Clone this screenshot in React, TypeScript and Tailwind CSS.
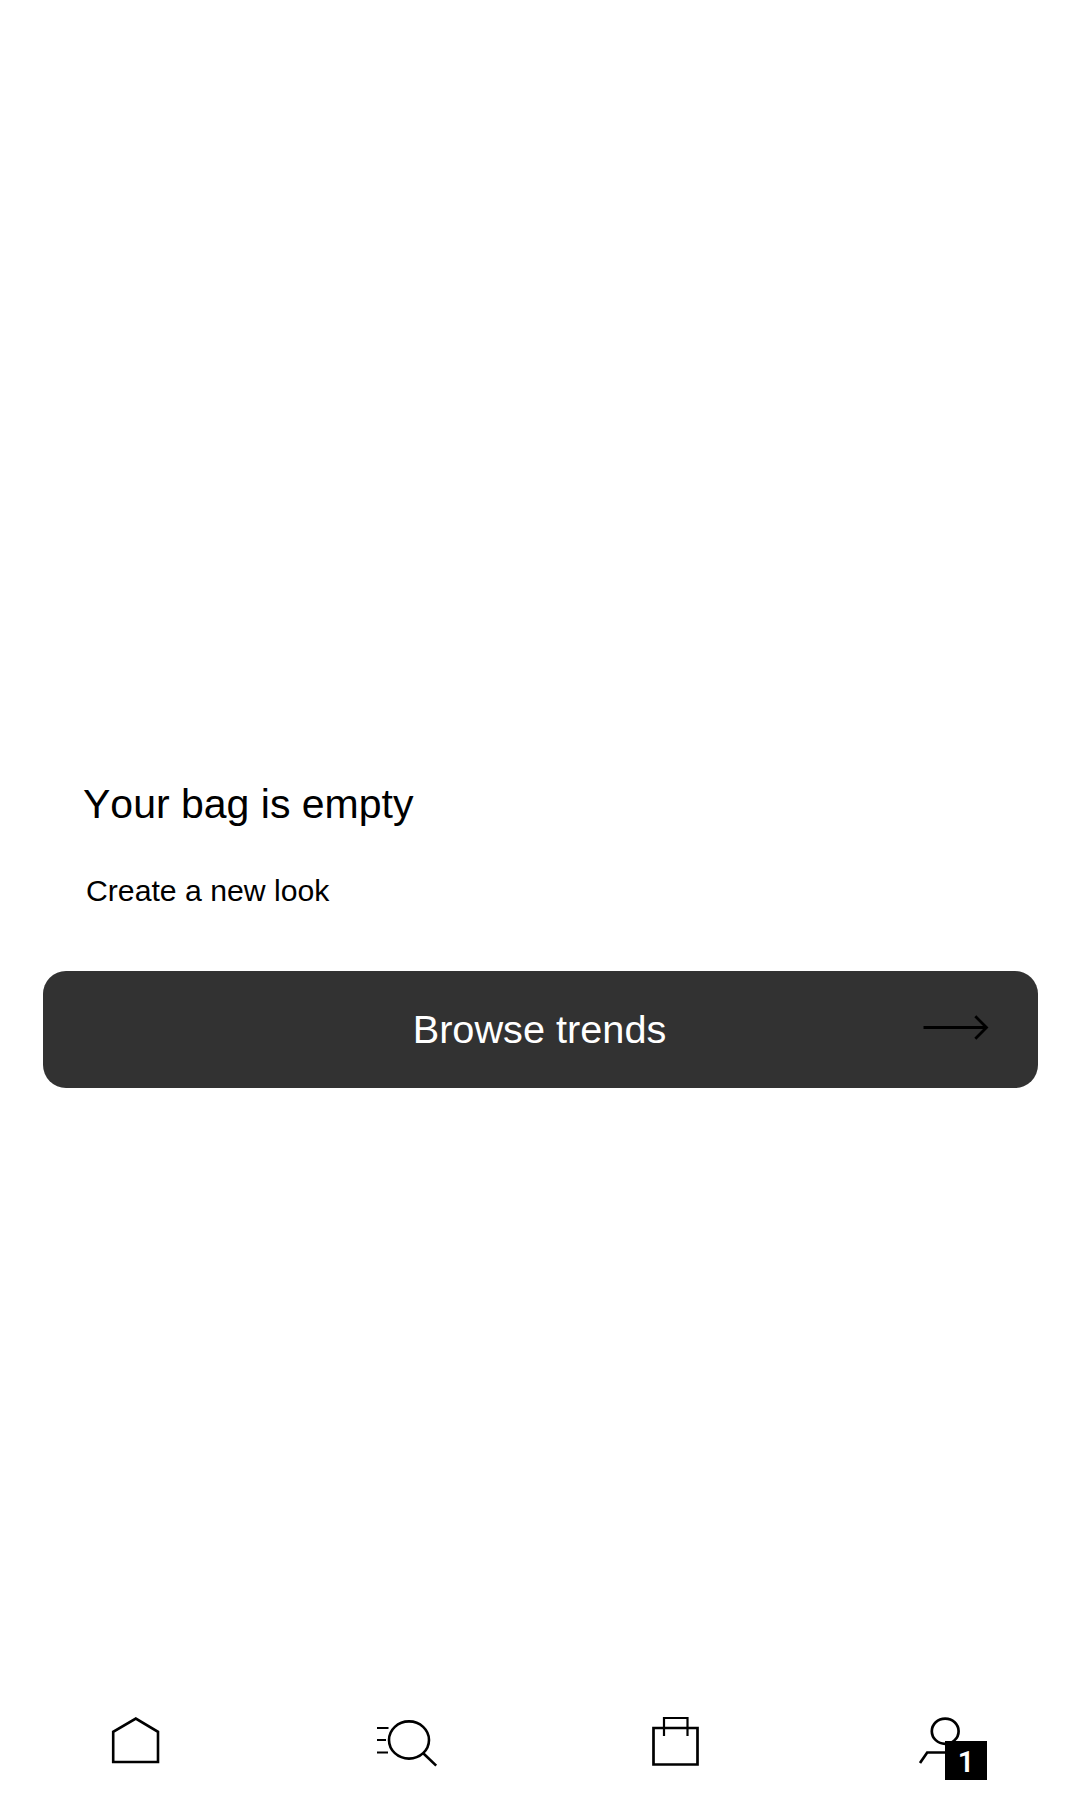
function HomeIcon() {
  return (
    <svg width="120" height="80" viewBox="75 1700 120 80" fill="none" stroke="#000" strokeWidth="2.6">
      <path d="M113.2 1731.8V1762H158V1731.8L135.8 1718.6Z" />
    </svg>
  );
}

function SearchIcon() {
  return (
    <svg width="120" height="80" viewBox="345 1700 120 80" fill="none" stroke="#000" strokeWidth="2.6">
      <ellipse cx="409" cy="1740" rx="20" ry="18.6" />
      <path d="M423.5 1753.5L436.2 1765.6" />
      <path strokeWidth="2.2" d="M377 1728H388.5M377 1740H386M377 1752.5H388" />
    </svg>
  );
}

function BagIcon() {
  return (
    <svg width="120" height="80" viewBox="615 1700 120 80" fill="none" stroke="#000">
      <path strokeWidth="2.7" d="M653.5 1728H697.5V1764.5H653.5Z" />
      <path strokeWidth="2.2" d="M664 1736V1718H687.5V1736" />
    </svg>
  );
}

function ProfileIcon() {
  return (
    <svg width="120" height="80" viewBox="885 1700 120 80" fill="none" stroke="#000" strokeWidth="2.7">
      <ellipse cx="945.2" cy="1731.2" rx="13.4" ry="12.6" />
      <path d="M920 1763L927.2 1752.5H950" />
    </svg>
  );
}

function ArrowIcon() {
  return (
    <svg width="66" height="26" viewBox="923 1014 66 26" fill="none" stroke="#000" strokeWidth="2.8">
      <path d="M923.5 1027.5H986.5M975.3 1016.3L986.5 1027.5L975.3 1038.7" />
    </svg>
  );
}

export default function App() {
  return (
    <div className="flex h-[1800px] w-[1080px] flex-col bg-white font-['Liberation_Sans',Arial,sans-serif] text-black">
      <main className="flex flex-1 flex-col px-[43px] pt-[779px]">
        <h1 className="ml-[40px] text-[41px] leading-[50px] [font-kerning:none]">Your bag is empty</h1>
        <p className="mt-[42px] ml-[43px] text-[30.2px] leading-[40px]">Create a new look</p>
        <button className="mt-[60px] grid h-[117px] w-[995px] grid-cols-[1fr_auto_1fr] items-center rounded-[23px] bg-[#323232] text-[39.7px] text-white">
          <span />
          <span className="-mt-[2px] -ml-[2px] leading-[48px]">Browse trends</span>
          <span className="-mt-[5px] mr-[49px] flex justify-end">
            <ArrowIcon />
          </span>
        </button>
      </main>
      <nav className="grid h-[100px] grid-cols-4 justify-items-center">
        <HomeIcon />
        <SearchIcon />
        <BagIcon />
        <div className="relative h-[80px] w-[120px]">
          <ProfileIcon />
          <span className="absolute top-[41px] left-[60px] flex h-[39px] w-[42px] items-center justify-center bg-black pt-[4px] font-['Roboto',sans-serif] text-[29px] leading-none font-semibold text-white">
            1
          </span>
        </div>
      </nav>
    </div>
  );
}
